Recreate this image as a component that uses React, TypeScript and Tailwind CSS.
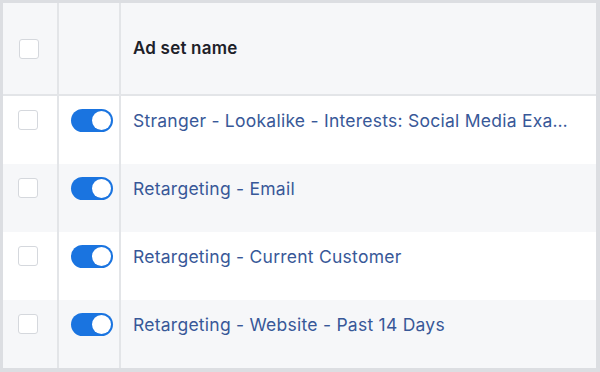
import React from 'react';

const rows = [
    { name: 'Stranger - Lookalike - Interests: Social Media Exa…', striped: false },
    { name: 'Retargeting - Email', striped: true },
    { name: 'Retargeting - Current Customer', striped: false },
    { name: 'Retargeting - Website - Past 14 Days', striped: true },
];

const Checkbox = () => (
    <div className="w-[20px] h-[20px] rounded-[3px] border border-[#d5d8dd] bg-white" />
);

const Toggle = () => (
    <div className="w-[42px] h-[23px] rounded-full bg-[#1a74e0] flex items-center justify-end pr-[2px]">
        <div className="w-[19px] h-[19px] rounded-full bg-white" />
    </div>
);

export default function App() {
    return (
        <div
            className="w-[600px] h-[372px] bg-[#dcdee2] pt-[3px] pl-[3px] pr-[4px] pb-[4px]"
            style={{ fontFamily: 'Inter, "Liberation Sans", Arial, sans-serif' }}
        >
            <div className="w-full h-full bg-white flex flex-col">
                {/* header */}
                <div className="h-[93px] flex bg-[#f6f7f9] border-b-2 border-[#e3e5e8]">
                    <div className="w-[56px] flex items-center pl-[16px] border-r-2 border-[#e3e5e8]">
                        <Checkbox />
                    </div>
                    <div className="w-[62px] border-r-2 border-[#e3e5e8]" />
                    <div className="flex-1 flex items-center pl-[12px] text-[17px] font-semibold tracking-[0.2px] text-[#1d2129]">
                        Ad set name
                    </div>
                </div>
                {rows.map((row) => (
                    <div
                        key={row.name}
                        className={`h-[68px] flex ${row.striped ? 'bg-[#f6f7f9]' : 'bg-white'}`}
                    >
                        <div className="w-[56px] flex items-start pt-[14px] pl-[15px] border-r-2 border-[#e3e5e8]">
                            <Checkbox />
                        </div>
                        <div className="w-[62px] flex items-start pt-[13px] pl-[12px] border-r-2 border-[#e3e5e8]">
                            <Toggle />
                        </div>
                        <div className="flex-1 min-w-0 pl-[12px] pr-[20px] pt-[13px]">
                            <div className="whitespace-nowrap text-[17.5px] leading-[24px] tracking-[0.25px] text-[#385898]">
                                {row.name}
                            </div>
                        </div>
                    </div>
                ))}
            </div>
        </div>
    );
}
